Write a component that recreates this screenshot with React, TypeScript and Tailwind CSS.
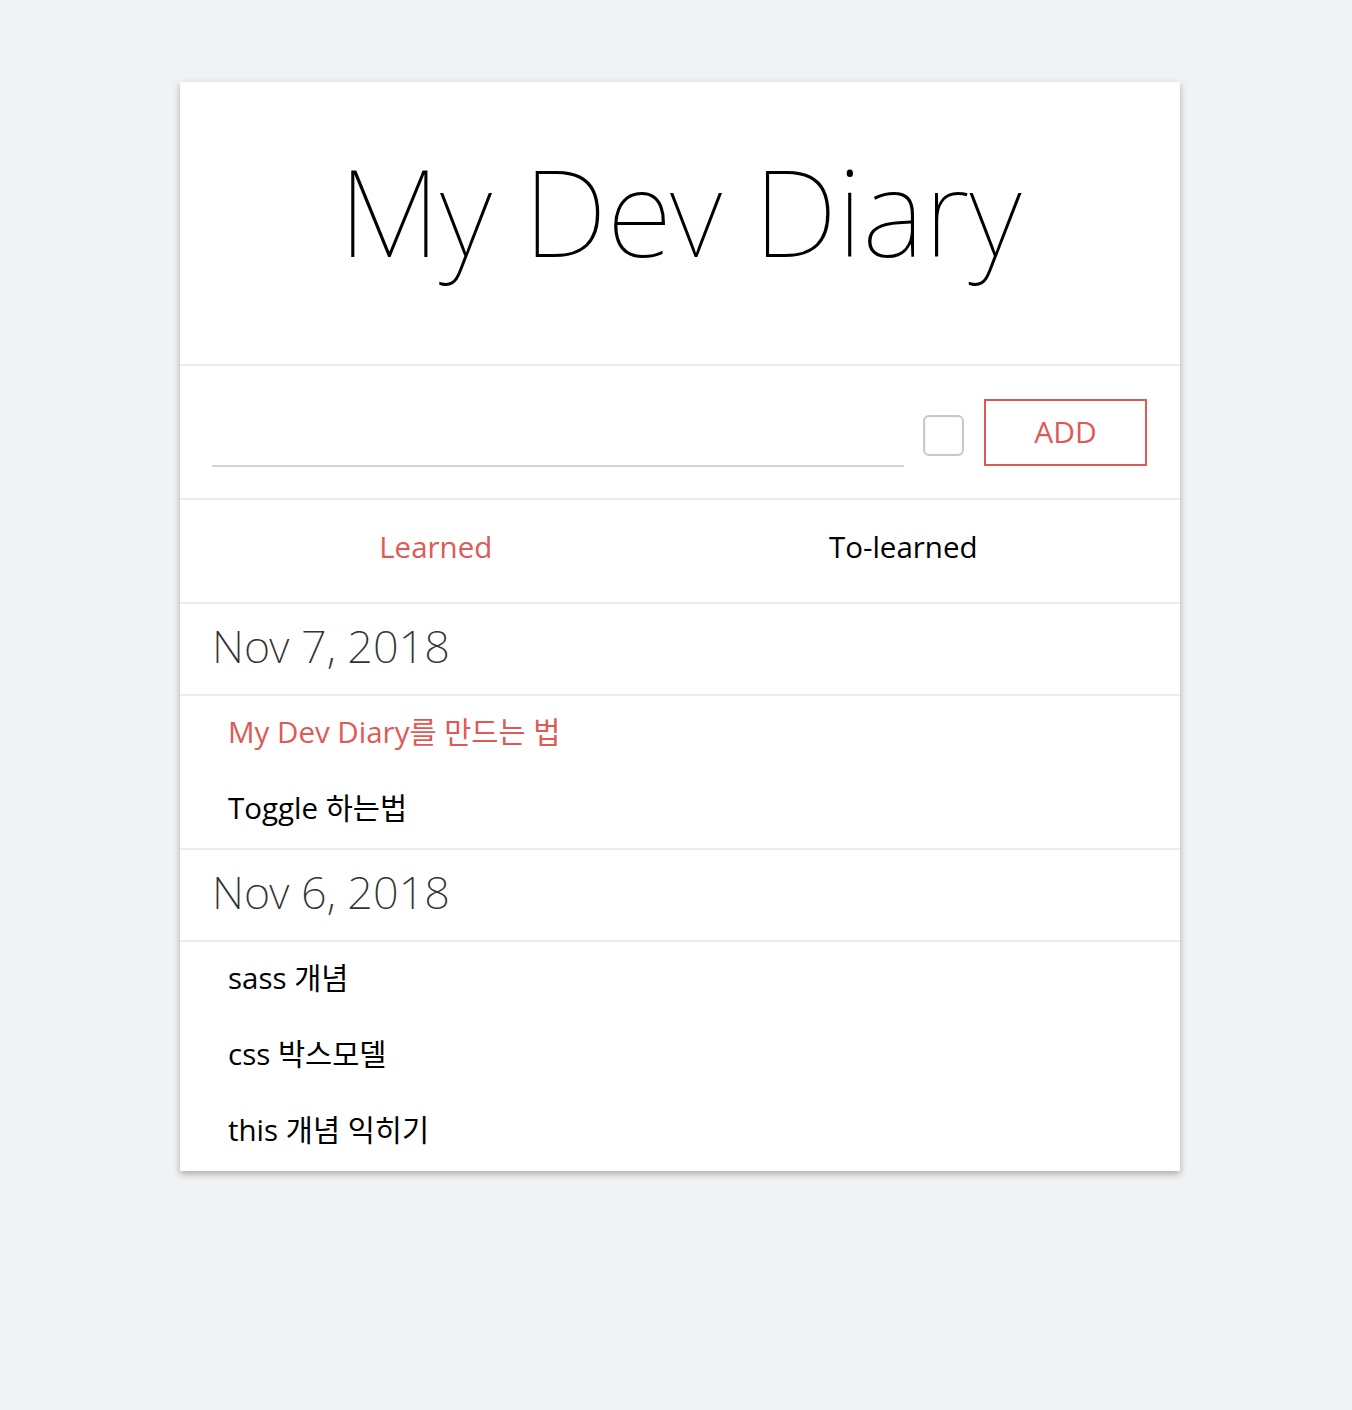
import React from "react"

const font = { fontFamily: '"Open Sans", "Noto Sans CJK KR", sans-serif' }
const thin = { fontFamily: '"Noto Sans", "Noto Sans CJK KR", sans-serif' }

interface Group {
  date: string
  items: { text: string; active?: boolean }[]
}

const groups: Group[] = [
  {
    date: "Nov 7, 2018",
    items: [{ text: "My Dev Diary를 만드는 법", active: true }, { text: "Toggle 하는법" }],
  },
  {
    date: "Nov 6, 2018",
    items: [{ text: "sass 개념" }, { text: "css 박스모델" }, { text: "this 개념 익히기" }],
  },
]

export default function App() {
  return (
    <div className="min-h-[1410px] bg-[#f1f2f4] pt-[82px]" style={font}>
      <div className="ml-[180px] w-[1000px] bg-white shadow-[0_3px_7px_rgba(0,0,0,0.3)]">
        {/* Title */}
        <header className="flex h-[284px] items-center justify-center border-b-2 border-[#e9ecef]">
          <h1 className="-mt-[26px] text-[121px] font-thin leading-none text-black" style={thin}>
            My Dev Diary
          </h1>
        </header>

        {/* Input */}
        <div className="flex h-[134px] items-center border-b-2 border-[#e9ecef] px-8">
          <input
            type="text"
            className="mt-[30px] h-[40px] w-[692px] border-b-2 border-[#d4d4d4] outline-none"
          />
          <div className="ml-[19px] mt-[6px] h-[41px] w-[41px] rounded-[6px] border-2 border-[#c8c8c8] shadow-[inset_0_0_2px_rgba(0,0,0,0.1)]" />
          <button className="ml-[20px] h-[67px] w-[163px] border-2 border-[#e05a55] pb-[2px] text-[30px] font-normal text-[#e05a55]">
            ADD
          </button>
        </div>

        {/* Tabs */}
        <div className="flex h-[104px] items-center border-b-2 border-[#e9ecef] pb-[7px] pl-[22px] pr-[43px] text-[29.5px]">
          <div className="flex-1 text-center text-[#e05a55]">Learned</div>
          <div className="flex-1 text-center text-black">To-learned</div>
        </div>

        {/* Groups */}
        {groups.map((g, gi) => (
          <section key={g.date} className={gi < groups.length - 1 ? "border-b-2 border-[#e9ecef]" : "pb-px"}>
            <div
              className="flex h-[92px] items-center border-b-2 border-[#e9ecef] px-8 pb-[6px] text-[45px] font-extralight text-[#333]"
              style={thin}
            >
              {g.date}
            </div>
            {g.items.map((it) => (
              <div
                key={it.text}
                className={
                  "flex h-[76px] items-center pb-[4px] pl-12 text-[29.5px] " +
                  (it.active ? "text-[#e05a55]" : "text-black")
                }
              >
                {it.text}
              </div>
            ))}
          </section>
        ))}
      </div>
    </div>
  )
}
